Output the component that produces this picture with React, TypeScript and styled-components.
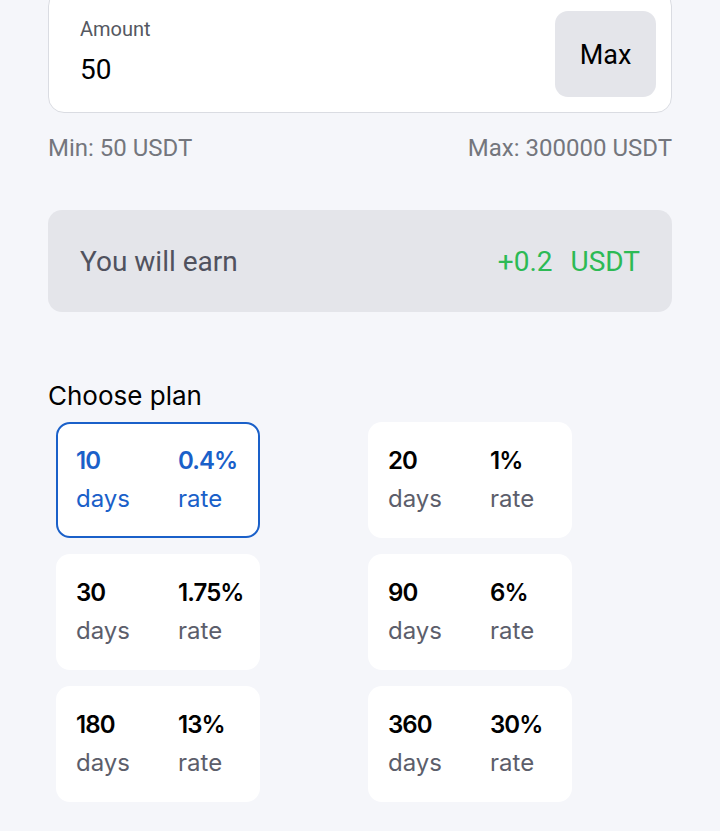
import React from 'react'
import styled, { createGlobalStyle } from 'styled-components'

const GlobalStyle = createGlobalStyle`
  html, body {
    margin: 0;
    padding: 0;
    background: #f5f6fa;
  }
  body {
    font-family: Roboto, 'Liberation Sans', sans-serif;
  }
`

interface Plan {
  days: number
  rate: string
}

const plans: Plan[] = [
  { days: 10, rate: '0.4%' },
  { days: 20, rate: '1%' },
  { days: 30, rate: '1.75%' },
  { days: 90, rate: '6%' },
  { days: 180, rate: '13%' },
  { days: 360, rate: '30%' },
]

const App = () => {
  const [selected, setSelected] = React.useState(0)

  return (
    <Page>
      <GlobalStyle />
      <InputCard>
        <InputField>
          <InputLabel>Amount</InputLabel>
          <InputValue>50</InputValue>
        </InputField>
        <MaxButton>Max</MaxButton>
      </InputCard>
      <LimitsRow>
        <span>Min: 50 USDT</span>
        <span>Max: 300000 USDT</span>
      </LimitsRow>
      <EarnBox>
        <EarnLabel>You will earn</EarnLabel>
        <EarnValue>+0.2&nbsp;&nbsp;USDT</EarnValue>
      </EarnBox>
      <SectionTitle>Choose plan</SectionTitle>
      <PlanGrid>
        {plans.map((plan, i) => (
          <PlanCell key={plan.days}>
            <PlanCard $active={i === selected} onClick={() => setSelected(i)}>
              <PlanColumn>
                <PlanNumber>{plan.days}</PlanNumber>
                <PlanCaption>days</PlanCaption>
              </PlanColumn>
              <PlanColumn>
                <PlanNumber>{plan.rate}</PlanNumber>
                <PlanCaption>rate</PlanCaption>
              </PlanColumn>
            </PlanCard>
          </PlanCell>
        ))}
      </PlanGrid>
    </Page>
  )
}

const Page = styled.div`
  padding: 0 48px 30px;
  margin-top: -10px;
  color: #000;
`

const InputCard = styled.div`
  box-sizing: border-box;
  height: 123px;
  background: #fff;
  border: 1.5px solid #dadce2;
  border-radius: 16px;
  display: flex;
  align-items: center;
  justify-content: space-between;
  padding: 0 15px 0 31px;
`

const InputField = styled.div`
  align-self: flex-start;
  display: flex;
  flex-direction: column;
  padding-top: 26px;
`

const InputLabel = styled.div`
  font-size: 20px;
  line-height: 24px;
  color: #555861;
`

const InputValue = styled.div`
  font-size: 28px;
  line-height: 32px;
  margin-top: 13px;
  color: #000;
`

const MaxButton = styled.button`
  width: 101px;
  height: 86px;
  margin-top: 4px;
  border: none;
  border-radius: 13px;
  background: #e4e5ea;
  font-family: Roboto, 'Liberation Sans', sans-serif;
  font-size: 27px;
  color: #000;
  padding: 3px 0 0;
`

const LimitsRow = styled.div`
  display: flex;
  justify-content: space-between;
  margin-top: 21px;
  font-size: 24px;
  line-height: 28px;
  color: #74767d;
`

const EarnBox = styled.div`
  height: 102px;
  margin-top: 48px;
  background: #e4e5ea;
  border-radius: 14px;
  display: flex;
  align-items: center;
  justify-content: space-between;
  padding: 0 32px;
`

const EarnLabel = styled.span`
  font-size: 28px;
  color: #50525e;
`

const EarnValue = styled.span`
  font-size: 28px;
  color: #2dba55;
  word-spacing: 2px;
`

const SectionTitle = styled.div`
  margin-top: 67px;
  font-family: Inter, Roboto, sans-serif;
  font-size: 26px;
  line-height: 34px;
  color: #000;
`

const PlanGrid = styled.div`
  display: grid;
  grid-template-columns: 1fr 1fr;
  row-gap: 16px;
  margin-top: 9px;
`

const PlanCell = styled.div`
  padding-left: 8px;
`

const PlanCard = styled.div<{ $active: boolean }>`
  box-sizing: border-box;
  width: 204px;
  height: 116px;
  background: #fff;
  border-radius: 14px;
  border: 2px solid ${(p) => (p.$active ? '#1a60c9' : 'transparent')};
  color: ${(p) => (p.$active ? '#1a60c9' : '#000')};
  --caption: ${(p) => (p.$active ? '#1a60c9' : '#5c5e6b')};
  display: grid;
  grid-template-columns: 102px 1fr;
  padding: 22px 0 0 18px;
  cursor: pointer;
`

const PlanColumn = styled.div`
  display: flex;
  flex-direction: column;
`

const PlanNumber = styled.div`
  font-family: Inter, Roboto, sans-serif;
  font-weight: 600;
  font-size: 24px;
  line-height: 30px;
  letter-spacing: -0.9px;
`

const PlanCaption = styled.div`
  font-family: Inter, Roboto, sans-serif;
  font-size: 24px;
  line-height: 30px;
  margin-top: 8px;
  color: var(--caption);
`

export default App
